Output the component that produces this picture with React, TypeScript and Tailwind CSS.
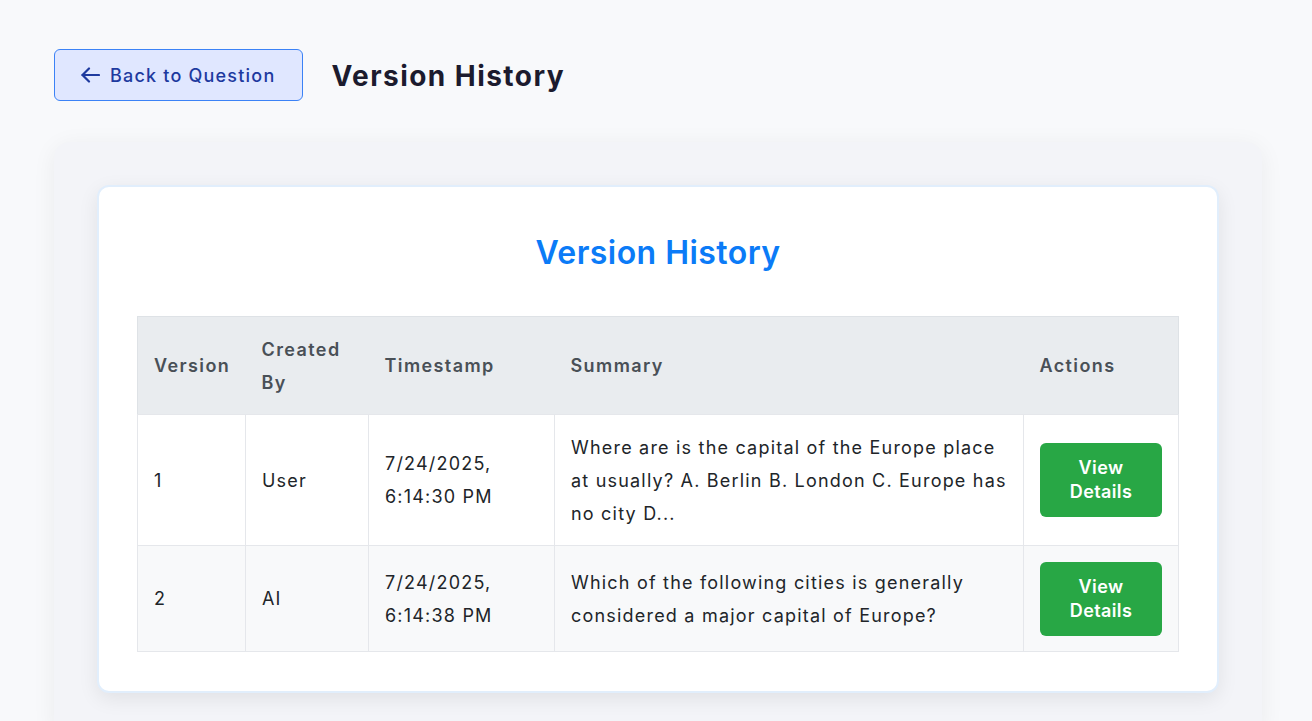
import React from "react";

const rows = [
  {
    v: "1",
    by: "User",
    ts: ["7/24/2025,", "6:14:30 PM"],
    summary:
      "Where are is the capital of the Europe place at usually? A. Berlin B. London C. Europe has no city D...",
  },
  {
    v: "2",
    by: "AI",
    ts: ["7/24/2025,", "6:14:38 PM"],
    summary: "Which of the following cities is generally considered a major capital of Europe?",
  },
];

function Arrow() {
  return (
    <svg width="19" height="16" viewBox="0 0 19 16" fill="none" stroke="currentColor" strokeWidth="2.2" strokeLinecap="round" strokeLinejoin="round">
      <path d="M18 8H1.5" />
      <path d="M8 1.5L1.5 8L8 14.5" />
    </svg>
  );
}

export default function App() {
  return (
    <div
      className="min-h-[721px] bg-[#f8f9fb] pl-[54px] pr-[50px] pt-[49px]"
      style={{ fontFamily: "Inter, 'Noto Sans', sans-serif" }}
    >
      <div className="flex items-center gap-[28px]">
        <button className="flex h-[52px] items-center gap-[10px] rounded-[6px] border border-[#3b82f6] bg-[#e0e7ff] pl-[26px] pr-[27px] text-[18px] font-medium tracking-[1.2px] text-[#1e3a9f]">
          <Arrow />
          <span>Back to Question</span>
        </button>
        <h1 className="pt-[2px] text-[28px] font-bold leading-none tracking-[1.45px] text-[#1c1b2e]">Version History</h1>
      </div>

      <div className="mt-[41px] rounded-[16px] bg-[#f3f4f8] px-[43px] pt-[43px] pb-[43px] shadow-[0_4px_24px_rgba(0,0,0,0.06)]">
        <div className="rounded-[12px] border-2 border-[#e1eefc] bg-white px-[38px] pt-[47px] pb-[39px] shadow-[0_6px_20px_rgba(0,0,0,0.08)]">
          <h2 className="mb-[43px] text-center text-[32px] font-semibold leading-[1.21] tracking-[0.45px] text-[#0b7bf7]">
            Version History
          </h2>
          <table className="w-full table-fixed border-collapse border border-[#dee2e6] text-[18px] leading-[33px] tracking-[1.2px]">
            <colgroup>
              <col className="w-[108px]" />
              <col className="w-[123px]" />
              <col className="w-[186px]" />
              <col />
              <col className="w-[155px]" />
            </colgroup>
            <thead>
              <tr className="bg-[#e9ecef] text-left text-[#495057]">
                {["Version", "Created By", "Timestamp", "Summary", "Actions"].map((h) => (
                  <th key={h} className="px-4 pt-4 pb-[15px] align-middle font-semibold tracking-[1.4px]">
                    {h}
                  </th>
                ))}
              </tr>
            </thead>
            <tbody className="text-[#212529]">
              {rows.map((r, i) => (
                <tr key={r.v} className={i % 2 === 1 ? "bg-[#f8f9fa]" : "bg-white"}>
                  <td className="border border-[#e5e7eb] px-4 pt-4 pb-[15px] align-middle">{r.v}</td>
                  <td className="border border-[#e5e7eb] px-4 pt-4 pb-[15px] align-middle">{r.by}</td>
                  <td className="border border-[#e5e7eb] px-4 pt-4 pb-[15px] align-middle">
                    {r.ts[0]}
                    <br />
                    {r.ts[1]}
                  </td>
                  <td className="border border-[#e5e7eb] px-4 pt-4 pb-[15px] align-middle">{r.summary}</td>
                  <td className="border border-[#e5e7eb] px-4 pt-4 pb-[15px] align-middle">
                    <button className="w-full rounded-[6px] bg-[#28a745] py-[13px] text-[18px] font-semibold leading-[24px] tracking-[0.4px] text-white">
                      View
                      <br />
                      Details
                    </button>
                  </td>
                </tr>
              ))}
            </tbody>
          </table>
        </div>
      </div>
    </div>
  );
}
